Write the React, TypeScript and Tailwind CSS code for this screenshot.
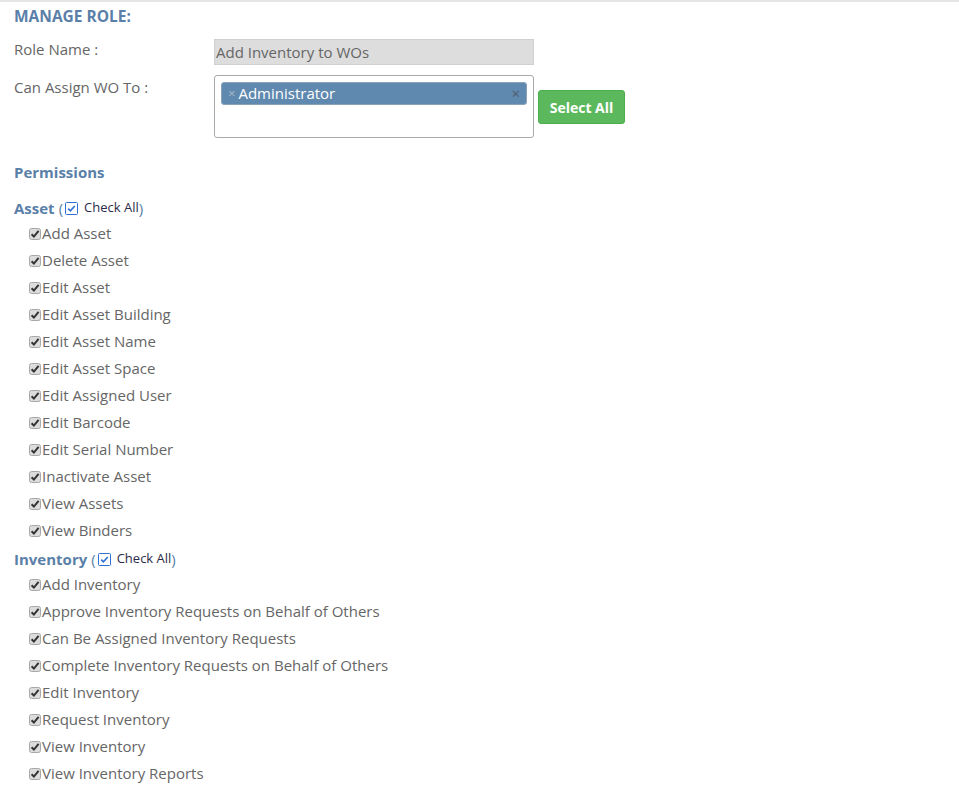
import React from "react";

const assetPerms = [
  "Add Asset",
  "Delete Asset",
  "Edit Asset",
  "Edit Asset Building",
  "Edit Asset Name",
  "Edit Asset Space",
  "Edit Assigned User",
  "Edit Barcode",
  "Edit Serial Number",
  "Inactivate Asset",
  "View Assets",
  "View Binders",
];

const inventoryPerms = [
  "Add Inventory",
  "Approve Inventory Requests on Behalf of Others",
  "Can Be Assigned Inventory Requests",
  "Complete Inventory Requests on Behalf of Others",
  "Edit Inventory",
  "Request Inventory",
  "View Inventory",
  "View Inventory Reports",
];

const GrayCheck = () => (
  <svg width="12" height="12" viewBox="0 0 12 12" className="shrink-0">
    <rect x="0.5" y="0.5" width="11" height="11" rx="2" fill="#dcdcdc" stroke="#a8a8a8" />
    <path d="M2.6 6.2 L4.9 8.6 L9.6 2.8" fill="none" stroke="#333" strokeWidth="2" />
  </svg>
);

const BlueCheck = () => (
  <svg width="13" height="13" viewBox="0 0 13 13" className="shrink-0">
    <rect x="0.5" y="0.5" width="12" height="12" rx="1" fill="#fff" stroke="#2f6fd6" />
    <path d="M3.2 6.6 L5.4 8.8 L9.8 4" fill="none" stroke="#2f6fd6" strokeWidth="1.6" />
  </svg>
);

const PermGroup = ({ title, items }: { title: string; items: string[] }) => (
  <div>
    <div className="flex items-center h-[24px]">
      <span className="font-bold text-[#5a7fa8] text-[15px]">{title}</span>
      <span className="text-[#5a7fa8] text-[15px] ml-[4px]">(</span>
      <span className="ml-[2px]">
        <BlueCheck />
      </span>
      <span className="ml-[6px] text-[13px] text-[#2b2b4a]">Check All</span>
      <span className="text-[#5a7fa8] text-[15px]">)</span>
    </div>
    <div className="pl-[15px]">
      {items.map((p) => (
        <div key={p} className="flex items-center h-[27px] gap-[1px]">
          <GrayCheck />
          <span className="text-[15px] text-[#666]">{p}</span>
        </div>
      ))}
    </div>
  </div>
);

export default function App() {
  return (
    <div
      className="min-h-screen bg-white border-t-2 border-[#e5e5e5] text-[#666]"
      style={{ fontFamily: '"Open Sans", "Noto Sans", sans-serif' }}
    >
      <div className="px-[14px] pt-[3px]">
        <div className="font-bold text-[15.5px] text-[#5a7fa8] h-[24px] flex items-center">MANAGE ROLE:</div>

        <div className="flex mt-[10px]">
          <div className="w-[200px] text-[15px] -mt-[1px]">Role Name :</div>
          <div className="w-[320px] h-[26px] bg-[#dddddd] border border-[#d0d0d0] text-[15px] text-[#666] flex items-center px-[1px]">
            Add Inventory to WOs
          </div>
        </div>

        <div className="flex mt-[10px]">
          <div className="w-[200px] text-[15px] pt-[1px]">Can Assign WO To :</div>
          <div className="w-[320px] h-[63px] border border-[#aaa] rounded-[3px] px-[6px] pt-[6px]">
            <div className="h-[23px] bg-[#6089b0] border border-[#8aa3bb] rounded-[3px] flex items-center px-[6px] text-[15px] text-white">
              <span className="text-[#a7b8c9] text-[13px] mr-[3px]">×</span>
              <span>Administrator</span>
              <span className="ml-auto text-[#4d5c6b] text-[15px]">×</span>
            </div>
          </div>
          <div className="ml-[4px] mt-[15px]">
            <button className="w-[87px] h-[34px] bg-[#5cb85c] border border-[#4cae4c] rounded-[3px] text-white font-bold text-[14px]">
              Select All
            </button>
          </div>
        </div>

        <div className="font-bold text-[15px] text-[#5a7fa8] mt-[22px] h-[24px] flex items-center">Permissions</div>

        <div className="mt-[12px]">
          <PermGroup title="Asset" items={assetPerms} />
        </div>
        <div className="mt-[3px]">
          <PermGroup title="Inventory" items={inventoryPerms} />
        </div>
      </div>
    </div>
  );
}
